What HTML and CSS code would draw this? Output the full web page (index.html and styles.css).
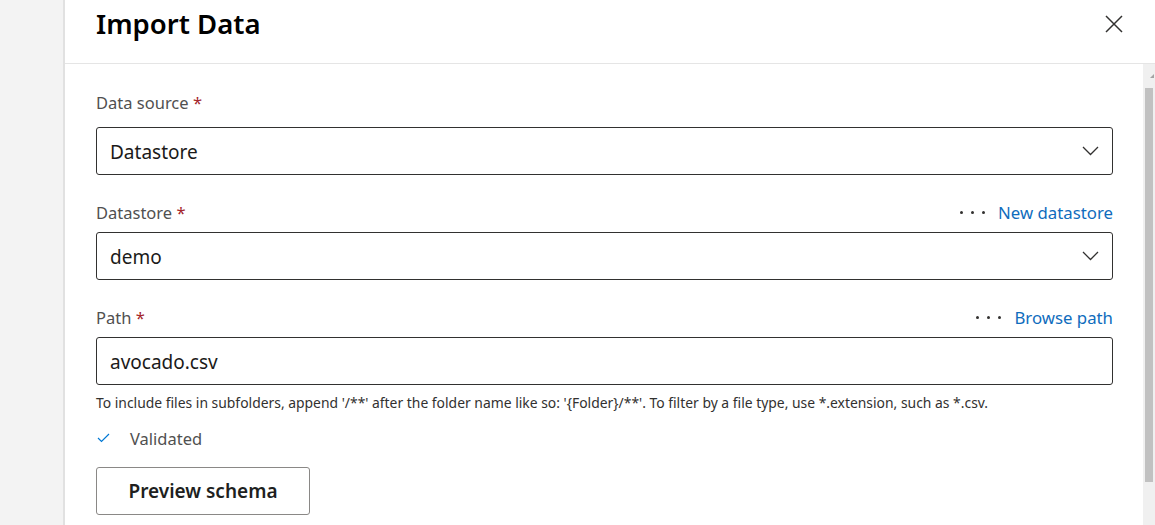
FILE: index.html
```html
<!DOCTYPE html>
<html lang="en">
<head>
<meta charset="utf-8">
<title>Import Data</title>
<link rel="stylesheet" href="styles.css">
</head>
<body>
<div class="page">
  <div class="backdrop"></div>
  <div class="panel">
    <header class="panel-header">
      <h1 class="title">Import Data</h1>
      <button class="close" aria-label="Close">
        <svg width="18" height="18" viewBox="0 0 18 18"><path d="M1 1 L17 17 M17 1 L1 17" stroke="#323130" stroke-width="1.5" fill="none"/></svg>
      </button>
    </header>
    <div class="panel-body">
      <div class="content">
        <div class="field">
          <div class="label-row first"><label class="label">Data source <span class="req">*</span></label></div>
          <div class="box select"><span>Datastore</span><svg class="chev" width="17" height="10" viewBox="0 0 17 10"><path d="M1 1 L8.5 8.5 L16 1" stroke="#323130" stroke-width="1.3" fill="none"/></svg></div>
        </div>
        <div class="field">
          <div class="label-row"><label class="label">Datastore <span class="req">*</span></label><a class="action"><span class="dots"><i></i><i></i><i></i></span>New datastore</a></div>
          <div class="box select"><span>demo</span><svg class="chev" width="17" height="10" viewBox="0 0 17 10"><path d="M1 1 L8.5 8.5 L16 1" stroke="#323130" stroke-width="1.3" fill="none"/></svg></div>
        </div>
        <div class="field">
          <div class="label-row"><label class="label">Path <span class="req">*</span></label><a class="action"><span class="dots"><i></i><i></i><i></i></span>Browse path</a></div>
          <div class="box"><span>avocado.csv</span></div>
          <p class="help">To include files in subfolders, append '/**' after the folder name like so: '{Folder}/**'. To filter by a file type, use *.extension, such as *.csv.</p>
        </div>
        <div class="validated">
          <svg width="13" height="10" viewBox="0 0 13 10"><path d="M1 5 L4.5 8.5 L12 1" stroke="#0078d4" stroke-width="1.2" fill="none"/></svg>
          <span>Validated</span>
        </div>
        <button class="btn">Preview schema</button>
      </div>
      <div class="scrollbar">
        <div class="arrow"></div>
        <div class="thumb"></div>
      </div>
    </div>
  </div>
</div>
</body>
</html>
```
FILE: styles.css
```css
* { box-sizing: border-box; }
html, body { margin: 0; padding: 0; }
body {
  width: 1155px;
  height: 525px;
  overflow: hidden;
  font-family: "Noto Sans", "Open Sans", sans-serif;
  color: #323130;
  background: #f3f3f3;
}
.page {
  display: flex;
  height: 525px;
}
.backdrop {
  width: 65px;
  background: #f3f3f3;
  border-right: 2px solid #e1e1e1;
}
.panel {
  flex: 1;
  background: #fff;
  display: flex;
  flex-direction: column;
  min-width: 0;
}
.panel-header {
  height: 64px;
  border-bottom: 1px solid #e5e5e5;
  display: flex;
  align-items: flex-start;
  justify-content: space-between;
  padding: 0 32px 0 31px;
}
.title {
  margin: 5px 0 0;
  font-size: 27.5px;
  font-weight: 600;
  color: #000;
  letter-spacing: 0;
}
.close {
  border: 0;
  background: none;
  padding: 0;
  margin-top: 15px;
  width: 18px;
  height: 18px;
  display: block;
}
.close svg { display: block; }
.panel-body {
  flex: 1;
  display: flex;
  min-height: 0;
}
.content {
  flex: 1;
  padding: 26px 30px 0 31px;
}
.label-row {
  display: flex;
  justify-content: space-between;
  align-items: center;
  height: 24px;
  margin: 25px 0 8px;
}
.label-row.first { margin: 0 0 13px; }
.label {
  font-size: 16.5px;
  color: #505050;
}
.req { color: #a4262c; }
.action {
  font-size: 16.8px;
  color: #0f6cbd;
  display: flex;
  align-items: center;
}
.dots {
  display: flex;
  gap: 8px;
  margin-right: 13px;
}
.dots i {
  width: 3px;
  height: 3px;
  border-radius: 50%;
  background: #323130;
  display: block;
}
.box {
  height: 48px;
  border: 1px solid #323130;
  border-radius: 3px;
  display: flex;
  align-items: center;
  justify-content: space-between;
  padding: 0 13px 0 13px;
  font-size: 19px;
  color: #1b1a19;
}
.box span { position: relative; top: 1px; }
.chev { display: block; }
.help {
  margin: 8px 0 0;
  font-size: 13.9px;
  line-height: 19px;
  color: #323130;
}
.validated {
  display: flex;
  align-items: center;
  margin-top: 14px;
  height: 24px;
  padding-left: 1px;
}
.validated svg { display: block; margin-right: 20px; }
.validated span {
  font-size: 16.5px;
  color: #505050;
}
.btn {
  display: block;
  margin-top: 17px;
  width: 214px;
  height: 48px;
  border: 1px solid #8a8886;
  border-radius: 3px;
  background: #fff;
  font-family: inherit;
  font-size: 19px;
  font-weight: 600;
  color: #201f1e;
}
.scrollbar {
  width: 12px;
  background: #f0f0f0;
  display: flex;
  flex-direction: column;
  align-items: center;
}
.arrow {
  margin-top: 10px;
  width: 0;
  height: 0;
  border-left: 4px solid transparent;
  border-bottom: 4px solid #a3a3a3;
  align-self: flex-end;
  margin-right: 1px;
}
.thumb {
  margin-top: 10px;
  width: 8px;
  height: 394px;
  background: #c1c1c1;
}
```
